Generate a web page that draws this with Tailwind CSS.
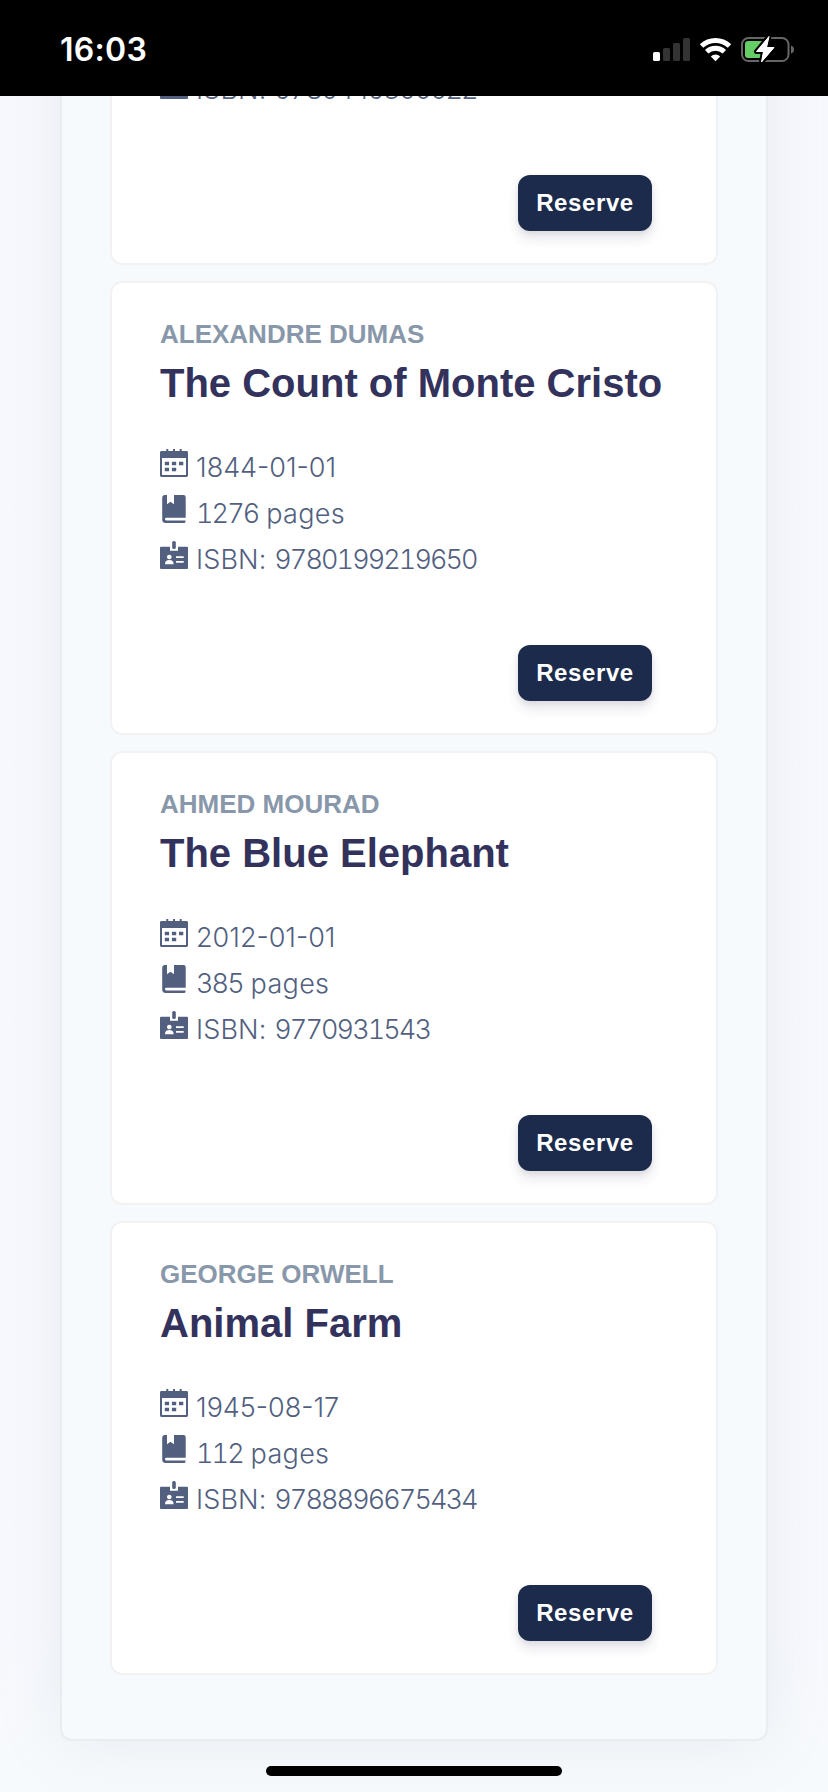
<!DOCTYPE html>
<html lang="en">
<head>
<meta charset="utf-8">
<title>Books</title>
<script src="https://cdn.jsdelivr.net/npm/@tailwindcss/browser@4"></script>
</head>
<body class="relative h-[1792px] w-[828px] overflow-hidden bg-linear-to-b from-[#f8f9fe] from-90% to-[#f7fafc] font-['Liberation_Sans',sans-serif]">
<svg class="hidden">
  <symbol id="calendar" viewBox="0 0 28 28"><path fill="currentColor" fill-rule="evenodd" d="M0 3.4Q0 2 1.4 2H6.3V0H8.3V2H13V0H15V2H19.7V0H21.7V2H26.600Q28 2 28 3.400V26.600Q28 28 26.600 28H1.400Q0 28 0 26.600ZM2 9V26H26V9ZM4.800 12.800h4.300v3.500h-4.300ZM11.900 12.800h4.300v3.500h-4.300ZM19 12.800h4.300v3.500h-4.300ZM4.800 18.800h4.300v3.400h-4.300ZM11.900 18.800h4.300v3.400h-4.300Z"/></symbol>
  <symbol id="book" viewBox="0 0 28 28"><path fill="currentColor" d="M7 0V9.300L10.500 6.700L14 9.300V0H23.500Q25.700 0 25.700 2.200V22.700H6.300Q5 22.700 5 24T6.300 25.600H25.500V26.500Q25.500 28 24 28H6Q2.200 28 2.200 24.500V3Q2.200 0 5 0Z"/></symbol>
  <symbol id="badge" viewBox="0 0 28 28"><path fill="currentColor" fill-rule="evenodd" d="M1 5.700H10V9.700H18V5.700H27Q28 5.700 28 6.700V27Q28 28 27 28H1Q0 28 0 27V6.700Q0 5.700 1 5.700ZM9.300 13.700a2.300 2.300 0 1 0 .01 0ZM5 23.200H13.600Q13.600 19 9.300 19T5 23.200ZM16 15.200h7.700v1.800h-7.700ZM16 20h7.700v1.800h-7.700Z"/><rect x="12.200" y="0" width="3.600" height="8" rx="1.600" fill="currentColor"/></symbol>
</svg>

<main class="absolute inset-x-[60px] top-[-100px] bottom-[51px] flex flex-col justify-end gap-4 rounded-xl border-2 border-[#ebecef] bg-[#f7fafc] px-12 pb-16 shadow-[0_0_64px_0_rgba(136,152,170,0.15)]" id="list">
  <article class="flex h-[214px] shrink-0 flex-col rounded-b-xl border-2 border-t-0 border-[#f2f2f2] bg-white px-12 pb-8">
    <div class="mt-3 flex h-[46px] gap-2 font-['Inter',sans-serif] text-[27px] leading-[46px] font-light whitespace-pre text-[#525f7f]"><svg class="mt-2 size-7"><use href="#badge"/></svg><span class="mt-1"><span class="tracking-[0.15px]">ISBN: </span><span class="tracking-[-1.9px] tabular-nums">9780449300022</span></span></div>
    <button class="mt-auto mr-4 h-14 w-[134px] self-end rounded-xl bg-[#1c2b4b] text-[24px] leading-[36px] font-bold tracking-[0.6px] text-white shadow-[0_8px_12px_rgba(50,50,93,0.11),0_2px_6px_rgba(0,0,0,0.08)]">Reserve</button>
  </article>
</main>

<header class="absolute inset-x-0 top-0 flex h-24 items-start justify-between bg-black">
  <div class="mt-[30px] ml-[60px] font-['Inter',sans-serif] text-[32px] leading-10 font-[560] tracking-[0.3px] text-white">16:03</div>
  <svg class="h-24 w-[188px]" viewBox="640 0 188 96">
    <rect x="653" y="52" width="7" height="9" rx="1.500" fill="#fff"/>
    <g fill="#333"><rect x="663" y="48" width="7" height="13" rx="1.500"/><rect x="673" y="43" width="7" height="18" rx="1.500"/><rect x="683" y="38" width="7" height="23" rx="1.500"/></g>
    <g fill="none" stroke="#fff" stroke-width="5"><path d="M701.500 46A20.500 20.500 0 0 1 729.500 46"/><path d="M706.700 51.800A12.800 12.800 0 0 1 724.300 51.800"/></g>
    <path d="M715.500 61.200L710.800 56.500A6.700 6.700 0 0 1 720.200 56.500Z" fill="#fff"/>
    <rect x="742" y="38" width="46.500" height="23" rx="6.500" fill="none" stroke="#666" stroke-width="2"/>
    <path d="M791 45.500Q794 46.500 794 49.500T791 53.500Z" fill="#666"/>
    <path d="M748 41H764V58H748Q745 58 745 55V44Q745 41 748 41Z" fill="#65cd65"/>
    <path d="M769 36.500L756.500 51.500H763.500L761.500 62L774 47.500H766.500Z" fill="#fff" stroke="#000" stroke-width="5" stroke-linejoin="round" paint-order="stroke"/>
    <path d="M769 36.500L756.500 51.500H763.500L761.500 62L774 47.500H766.500Z" fill="#fff" stroke="#fff" stroke-width="1" stroke-linejoin="round"/>
  </svg>
</header>
<div class="absolute bottom-4 left-[266px] h-2.5 w-[296px] rounded-full bg-black"></div>

<template id="card">
  <article class="flex h-[454px] shrink-0 flex-col rounded-xl border-2 border-[#f2f2f2] bg-white px-12 pt-8 pb-8">
    <h6 class="text-[26px] leading-[39px] font-bold text-[#8898aa] uppercase" data-m></h6>
    <h3 class="mt-[5px] text-[40px] leading-[48px] font-bold whitespace-nowrap text-[#32325d]" data-m></h3>
    <ul class="mt-[34px] font-['Inter',sans-serif] text-[27px] leading-[46px] font-light text-[#525f7f]">
      <li class="flex h-[46px] gap-2"><svg class="mt-2 size-7"><use href="#calendar"/></svg><span class="mt-1" data-m></span></li>
      <li class="flex h-[46px] gap-2"><svg class="mt-2 size-7"><use href="#book"/></svg><span class="mt-1 whitespace-pre"><span class="tracking-[-1.9px] tabular-nums" data-m></span><span class="tracking-[0.3px]"> pages</span></span></li>
      <li class="flex h-[46px] gap-2"><svg class="mt-2 size-7"><use href="#badge"/></svg><span class="mt-1 whitespace-pre"><span class="tracking-[0.15px]">ISBN: </span><span class="tracking-[-1.9px] tabular-nums" data-m></span></span></li>
    </ul>
    <button class="mt-auto mr-4 h-14 w-[134px] self-end rounded-xl bg-[#1c2b4b] text-[24px] leading-[36px] font-bold tracking-[0.6px] text-white shadow-[0_8px_12px_rgba(50,50,93,0.11),0_2px_6px_rgba(0,0,0,0.08)]">Reserve</button>
  </article>
</template>
<script>
const books=[
 ["Alexandre Dumas","The Count of Monte Cristo","1844-01-01","1276","9780199219650"],
 ["Ahmed Mourad","The Blue Elephant","2012-01-01","385","9770931543"],
 ["George Orwell","Animal Farm","1945-08-17","112","9788896675434"]];
for(const b of books){const n=document.getElementById("card").content.cloneNode(true);n.querySelectorAll("[data-m]").forEach((e,i)=>e.textContent=b[i]);document.getElementById("list").append(n)}
</script>
</body>
</html>
